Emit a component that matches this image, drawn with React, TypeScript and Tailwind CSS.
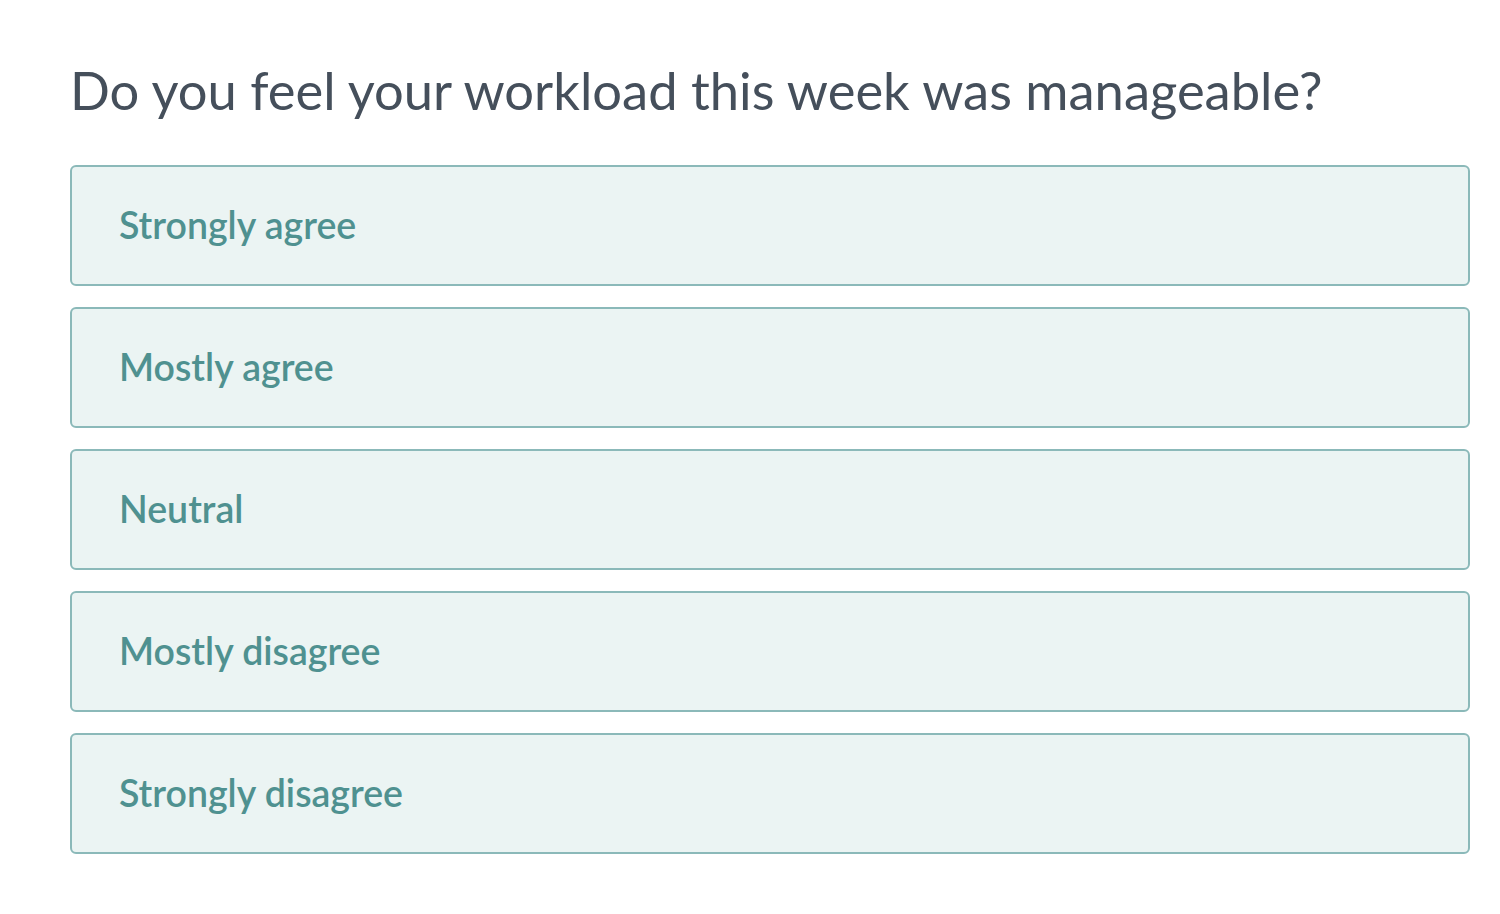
const options = [
  "Strongly agree",
  "Mostly agree",
  "Neutral",
  "Mostly disagree",
  "Strongly disagree",
];

export default function App() {
  return (
    <div
      className="w-full min-h-screen bg-white pl-[70px] pr-[30px] pt-[60px]"
      style={{ fontFamily: "Lato, 'Open Sans', sans-serif" }}
    >
      <h1 className="text-[52.5px] leading-[60px] text-[#454f5b] font-normal">
        Do you feel your workload this week was manageable?
      </h1>
      <div className="mt-[45px] flex flex-col gap-[21px]">
        {options.map((item) => (
          <button
            key={item}
            className="h-[121px] w-full flex items-center px-[47px] rounded-[6px] border-2 border-[#8bb9b9] bg-[#ebf4f3] text-left"
          >
            <span className="text-[37.5px] text-[#4f9190] font-semibold">{item}</span>
          </button>
        ))}
      </div>
    </div>
  );
}
